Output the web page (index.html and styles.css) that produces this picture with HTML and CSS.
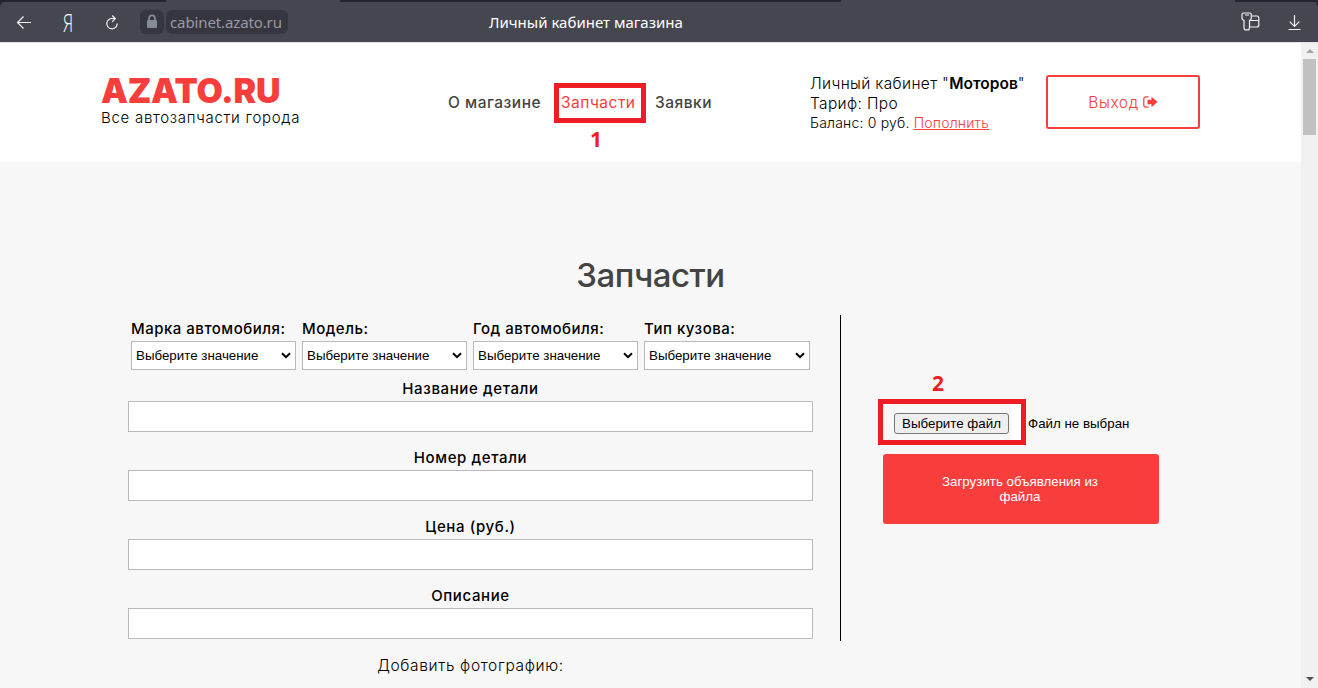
FILE: index.html
```html
<!DOCTYPE html>
<html lang="ru">
<head>
<meta charset="utf-8">
<title>Личный кабинет магазина</title>
<link rel="stylesheet" href="styles.css">
</head>
<body>
<div class="browser">
  <div class="toolbar">
    <span class="tab-edge tab-edge-left"></span>
    <span class="tab-edge tab-edge-mid"></span>
    <span class="tab-edge tab-edge-right"></span>
    <div class="tools">
      <svg class="ic-back" width="16" height="16" viewBox="0 0 16 16"><path d="M15 7.5H1.5M7.5 1.5L1.5 7.5L7.5 13.5"/></svg>
      <span class="ya">Я</span>
      <svg class="ic-reload" width="14" height="16" viewBox="0 0 14 16"><path d="M9.8 3.5H6.5A5.2 5.2 0 1 0 12.2 8.5M7.2 .5L10.3 3.5L7.2 6.8"/></svg>
    </div>
    <div class="address">
      <span class="lock"><svg width="12" height="15" viewBox="0 0 12 15"><path class="lock-bow" d="M3 7V4.3a3 3 0 0 1 6 0V7"/><rect class="lock-body" x="1" y="6" width="10" height="8" rx="1"/></svg></span>
      <span class="url">cabinet.azato.ru</span>
    </div>
    <div class="window-title">Личный кабинет магазина</div>
    <div class="tools-right">
      <svg width="19" height="19" viewBox="0 0 19 19"><path d="M2.7 1H8.6Q10.3 1 10.3 2.7V6.6Q10.3 8 8.5 8.4V15.5L7.8 17.8H4L3 16.5V8.4Q1 8 1 6.6V2.7Q1 1 2.7 1ZM4 3H8M11 4H15.8Q17.8 4 17.8 6V13Q17.8 15 15.8 15H9M9.5 8.5H17.5"/></svg>
      <svg width="13" height="17" viewBox="0 0 13 17"><path d="M6.5 1V12M1.7 7.7L6.5 12.5L11.3 7.7M.5 15.5H12.5"/></svg>
    </div>
  </div>
  <div class="viewport">
    <div class="page">
      <header class="header">
        <div class="brand">
          <div class="logo">AZATO.RU</div>
          <div class="slogan">Все автозапчасти города</div>
        </div>
        <nav class="nav">
          <a class="nav-about">О магазине</a>
          <a class="nav-parts">Запчасти<span class="frame frame-one"></span><b class="step step-one">1</b></a>
          <a class="nav-orders">Заявки</a>
        </nav>
        <div class="account">
          <div class="acc-name">Личный кабинет "<b>Моторов</b>"</div>
          <div class="acc-plan">Тариф: Про</div>
          <div class="acc-balance">Баланс: 0 руб. <a>Пополнить</a></div>
        </div>
        <a class="logout"><span>Выход</span><svg width="15" height="12" viewBox="0 0 15 12"><path d="M5.5 .8H3Q.8 .8 .8 3V9Q.8 11.2 3 11.2H5.5" fill="none" stroke="#f83d3d" stroke-width="1.2"/><path d="M4.5 3.8H8.5V.7L14.5 6L8.5 11.3V8.2H4.5Z" fill="#f83d3d"/></svg></a>
      </header>
      <main class="content">
        <h1 class="title">Запчасти</h1>
        <div class="columns">
          <form class="form">
            <div class="selects">
              <label class="pick"><span class="lb">Марка автомобиля:</span><span class="select">Выберите значение<svg width="10" height="7" viewBox="0 0 10 7"><path d="M1 1.2L5 5.2L9 1.2"/></svg></span></label>
              <label class="pick"><span class="lb">Модель:</span><span class="select">Выберите значение<svg width="10" height="7" viewBox="0 0 10 7"><path d="M1 1.2L5 5.2L9 1.2"/></svg></span></label>
              <label class="pick"><span class="lb">Год автомобиля:</span><span class="select">Выберите значение<svg width="10" height="7" viewBox="0 0 10 7"><path d="M1 1.2L5 5.2L9 1.2"/></svg></span></label>
              <label class="pick"><span class="lb">Тип кузова:</span><span class="select">Выберите значение<svg width="10" height="7" viewBox="0 0 10 7"><path d="M1 1.2L5 5.2L9 1.2"/></svg></span></label>
            </div>
            <label class="field"><span class="lb">Название детали</span><input class="input" type="text"></label>
            <label class="field"><span class="lb">Номер детали</span><input class="input" type="text"></label>
            <label class="field"><span class="lb">Цена (руб.)</span><input class="input" type="text"></label>
            <label class="field"><span class="lb">Описание</span><input class="input" type="text"></label>
            <div class="photo">Добавить фотографию:</div>
          </form>
          <div class="divider"></div>
          <div class="upload">
            <div class="file">
              <span class="frame frame-two"></span><b class="step step-two">2</b>
              <span class="file-button">Выберите файл</span>
              <span class="file-name">Файл не выбран</span>
            </div>
            <div class="submit">Загрузить объявления из файла</div>
          </div>
        </div>
      </main>
    </div>
    <div class="scrollbar">
      <span class="arrow arrow-up"></span>
      <span class="thumb"></span>
      <span class="arrow arrow-down"></span>
    </div>
  </div>
</div>
</body>
</html>
```
FILE: styles.css
```css
* { box-sizing: border-box; }
body { margin: 0; background: #25242f; font-family: Inter, sans-serif; color: #000; }
.browser { width: 1318px; height: 688px; overflow: hidden; display: flex; flex-direction: column; }

.toolbar { position: relative; flex: none; height: 42px; background: #464650; border-radius: 8px 8px 0 0; display: flex; align-items: flex-start; color: #fff; }
.toolbar svg { fill: none; stroke: #f2f2f4; stroke-width: 1.2; }
.tab-edge { position: absolute; top: 0; height: 2px; background: #25242f; }
.tab-edge-left { left: 0; width: 166px; }
.tab-edge-mid { left: 340px; width: 501px; }
.tab-edge-right { left: 1235px; width: 83px; }
.tools { display: flex; align-items: center; height: 42px; padding: 3px 0 0 16px; width: 140px; }
.ya { margin-left: 31px; width: 12px; font: 25px/24px "Open Sans", sans-serif; font-weight: 300; transform: translateY(-1px) scaleX(.68); transform-origin: left; }
.ic-reload { margin-left: 30px; }
.address { display: flex; gap: 2px; margin-top: 10px; width: 349px; }
.lock { width: 24px; height: 24px; border-radius: 6px; background: #353640; display: flex; align-items: flex-start; justify-content: center; padding-top: 4px; }
.toolbar .lock-bow { fill: none; stroke: #868c95; stroke-width: 1.7; }
.toolbar .lock-body { fill: #868c95; stroke: none; }
.url { height: 24px; width: 122px; border-radius: 6px; background: #353640; padding-left: 4px; font: 15px/25px "Noto Sans", sans-serif; letter-spacing: -.12px; color: #9a9aa3; white-space: nowrap; }
.window-title { margin-top: 10px; font: 15px/25px "Noto Sans", sans-serif; white-space: nowrap; width: 752px; }
.tools-right { display: flex; gap: 28px; align-items: flex-start; padding-top: 12px; }
.tools-right svg + svg { margin-top: 2px; }

.viewport { flex: 1; display: flex; min-height: 0; border-top: 1px solid #e6e6e8; }
.page { width: 1301px; background: #f7f7f7; overflow: hidden; }
.header { display: flex; height: 119px; background: #fff; padding-left: 101px; }
.brand { width: 347px; padding-top: 30px; }
.logo { font-size: 34px; line-height: 36px; font-weight: 900; letter-spacing: -.3px; color: #f83d3d; white-space: nowrap; }
.slogan { font-size: 15px; line-height: 18px; letter-spacing: .72px; font-weight: 300; white-space: nowrap; }
.nav { display: flex; width: 362px; padding-top: 49px; font-size: 15.5px; line-height: 21px; letter-spacing: .5px; font-weight: 500; color: #444; white-space: nowrap; }
.nav-about { width: 113px; }
.nav-parts { position: relative; width: 94px; color: #f83d3d; font-weight: 400; }
.frame { position: absolute; border: 5px solid #ee1c24; }
.frame-one { left: -7px; top: -9px; width: 92px; height: 40px; }
.step { position: absolute; color: #ee1c24; font: bold 21px/24px "Open Sans", sans-serif; letter-spacing: 0; }
.step-one { left: 29px; top: 35px; }
.account { width: 236px; padding-top: 31px; white-space: nowrap; font-size: 15.5px; line-height: 20px; letter-spacing: .35px; font-weight: 300; }
.acc-name b { font-weight: 600; letter-spacing: 0; }
.acc-balance { font-size: 14px; line-height: 18px; letter-spacing: .2px; }
.acc-balance a { color: #f83d3d; text-decoration: underline; }
.logout { margin-top: 32px; width: 154px; height: 54px; border: 2px solid #f83d3d; border-radius: 3px; display: flex; align-items: center; justify-content: center; gap: 4px; color: #f83d3d; font-size: 15.5px; letter-spacing: .6px; font-weight: 300; }

.title { margin: 0; padding-top: 91px; height: 153px; font-size: 33px; line-height: 44px; letter-spacing: -.5px; font-weight: 500; color: #444; text-align: center; white-space: nowrap; }
.columns { display: flex; padding-left: 128px; align-items: flex-start; }
.form { width: 685px; padding-top: 4px; }
.selects { display: flex; gap: 6px; padding-left: 3px; height: 60px; }
.pick { width: 165px; display: flex; flex-direction: column; }
.pick:last-child { width: 166px; }
.lb { font-size: 15px; line-height: 20px; letter-spacing: .62px; font-weight: 500; white-space: nowrap; }
.pick .lb { height: 22px; letter-spacing: .5px; }
.select { height: 29px; border: 1px solid #bababa; background: #fff; display: flex; align-items: center; justify-content: space-between; padding: 0 4px; font: 13.333px "Liberation Sans", sans-serif; white-space: nowrap; }
.select svg { fill: none; stroke: #000; stroke-width: 2; }
.field { display: flex; flex-direction: column; align-items: center; height: 69px; }
.field .lb { height: 22px; }
.input { width: 685px; height: 31px; margin: 0; border: 1px solid #bababa; background: #fff; }
.photo { text-align: center; font-size: 15.5px; line-height: 20px; letter-spacing: .66px; font-weight: 300; padding-top: 1px; }
.divider { width: 1px; height: 326px; margin-left: 27px; background: #000; }
.upload { margin-left: 42px; width: 276px; padding-top: 97px; font: 13.333px/15px "Liberation Sans", sans-serif; }
.file { position: relative; display: flex; align-items: center; padding-left: 11px; height: 22px; white-space: nowrap; }
.frame-two { left: -5px; top: -13px; width: 148px; height: 46px; background: linear-gradient(#fff, #fff) right / 10px 100% no-repeat; }
.step-two { left: 49px; top: -41px; }
.file-button { position: relative; width: 115px; height: 21px; border: 1px solid #767676; border-radius: 3px; background: #efefef; line-height: 19px; text-align: center; }
.file-name { margin-left: 19px; }
.submit { margin-top: 20px; height: 70px; border-radius: 3px; background: #f83d3d; color: #fff; display: flex; align-items: center; justify-content: center; text-align: center; padding: 0 51px 0 49px; }

.scrollbar { width: 17px; background: #f1f1f1; display: flex; flex-direction: column; align-items: center; }
.arrow { border: 4px solid transparent; width: 0; height: 0; flex: none; }
.arrow-up { border-top: 0; border-bottom-color: #a3a3a3; margin-top: 6px; }
.thumb { width: 13px; height: 76px; margin-top: 6px; background: #c1c1c1; }
.arrow-down { border-bottom: 0; border-top-color: #505050; margin-top: auto; margin-bottom: 7px; }
```
